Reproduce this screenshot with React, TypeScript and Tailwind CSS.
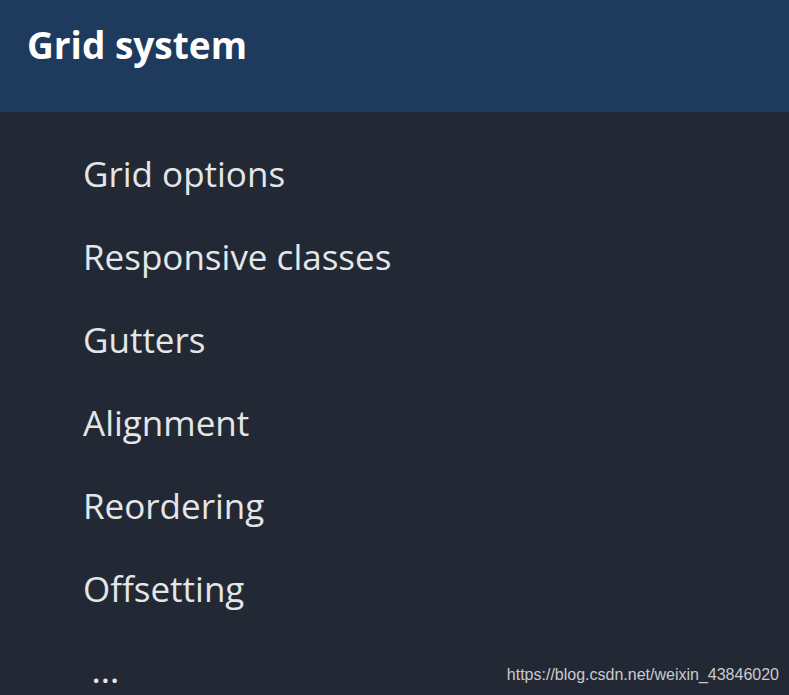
const items = ["Grid options", "Responsive classes", "Gutters", "Alignment", "Reordering", "Offsetting"]

export default function App() {
  return (
    <div className="relative flex h-[695px] w-[789px] flex-col overflow-hidden bg-[#222935] font-['Open_Sans',sans-serif]">
      {/* Header */}
      <header className="flex h-[112px] shrink-0 items-start bg-[#1e3a5c] pl-[27px] pt-[21px]">
        <h1 className="text-[37px] font-bold leading-[48px] text-white">Grid system</h1>
      </header>

      {/* Menu */}
      <ul className="flex flex-col pl-[83px] pt-[38px]">
        {items.map((item) => (
          <li key={item} className="h-[83px] text-[35px] leading-[48px] text-[#e4e6e8]">
            {item}
          </li>
        ))}
        <li className="pl-[9px] text-[30px] font-semibold leading-[48px] tracking-[1px] text-[#e4e6e8]">...</li>
      </ul>

      <span className="absolute bottom-[8px] right-[10px] font-['Liberation_Sans',sans-serif] text-[16px] text-[#c9cbce]">
        https://blog.csdn.net/weixin_43846020
      </span>
    </div>
  )
}
